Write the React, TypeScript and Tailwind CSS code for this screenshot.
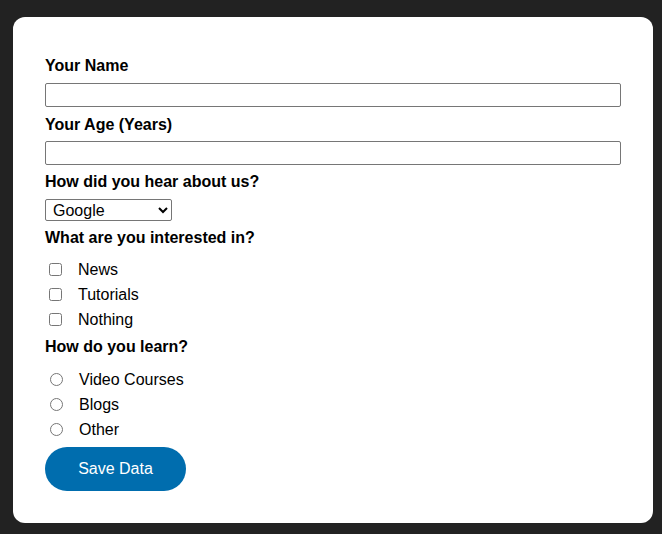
import React from 'react';

const interests = ['News', 'Tutorials', 'Nothing'];
const learning = ['Video Courses', 'Blogs', 'Other'];

const labelCls = 'block text-base font-bold leading-[18px] text-black';

const App: React.FC = () => {
  return (
    <div className="min-h-screen bg-[#222222] pt-[17px] pl-[13px] font-['Liberation_Sans',Arial,sans-serif]">
      <form
        className="w-[640px] rounded-xl bg-white px-8 pt-[40px] pb-8"
        onSubmit={(e) => e.preventDefault()}
      >
        <label htmlFor="name" className={labelCls}>
          Your Name
        </label>
        <input
          id="name"
          type="text"
          className="mt-[8px] block h-6 w-full border border-[#767676] rounded-[2px] px-1 text-base"
        />

        <label htmlFor="age" className={`${labelCls} mt-[9px]`}>
          Your Age (Years)
        </label>
        <input
          id="age"
          type="number"
          className="mt-[7px] block h-6 w-full border border-[#767676] rounded-[2px] px-1 text-base"
        />

        <label htmlFor="source" className={`${labelCls} mt-[8px]`}>
          How did you hear about us?
        </label>
        <select
          id="source"
          defaultValue="google"
          className="mt-[8px] block h-[22px] w-[127px] border border-[#767676] rounded-[2px] pl-[3px] text-base leading-[20px] text-black"
        >
          <option value="google">Google</option>
          <option value="friend">Friend</option>
          <option value="other">Other</option>
        </select>

        <p className={`${labelCls} mt-[8px]`}>What are you interested in?</p>
        <div className="mt-[10px]">
          {interests.map((item) => (
            <label key={item} className="flex h-[25px] items-center text-base text-black">
              <input type="checkbox" className="ml-1 h-[13px] w-[13px]" />
              <span className="ml-4">{item}</span>
            </label>
          ))}
        </div>

        <p className={`${labelCls} mt-[6px]`}>How do you learn?</p>
        <div className="mt-[11px]">
          {learning.map((item) => (
            <label key={item} className="flex h-[25px] items-center text-base text-black">
              <input type="radio" name="learn" className="ml-[5px] h-[13px] w-[13px]" />
              <span className="ml-4">{item}</span>
            </label>
          ))}
        </div>

        <button
          type="submit"
          className="mt-[5px] flex h-11 w-[141px] items-center justify-center rounded-full bg-[#006dae] text-base text-white"
        >
          Save Data
        </button>
      </form>
    </div>
  );
};

export default App;
